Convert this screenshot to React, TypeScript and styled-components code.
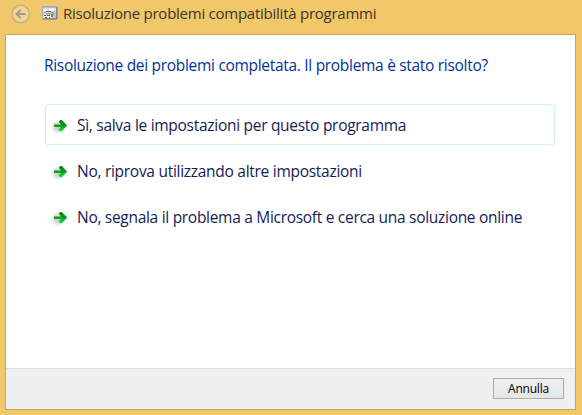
import React from "react";
import styled, { createGlobalStyle } from "styled-components";

const GlobalStyle = createGlobalStyle`
  * { box-sizing: border-box; }
  body { margin: 0; background: #f0c869; font-family: "Open Sans", "Noto Sans", sans-serif; }
`;

const Window = styled.div`
  width: 582px;
  height: 415px;
  padding: 0 6px 5px 5px;
  background: #f0c869;
  display: flex;
  flex-direction: column;
  overflow: hidden;
`;

const TitleBar = styled.header`
  height: 34px;
  flex: none;
  display: flex;
  align-items: flex-start;
  padding: 4px 0 0 6px;
`;

const BackIcon = styled.svg`
  width: 20px;
  height: 20px;
  flex: none;
`;

const ProgramIcon = styled.svg`
  width: 16px;
  height: 14px;
  margin: 2px 0 0 11px;
  flex: none;
`;

const Line = styled.span<{ $spacing: number }>`
  font-size: 15.5px;
  line-height: 20px;
  white-space: nowrap;
  letter-spacing: ${(p) => p.$spacing}px;
`;

const Title = styled(Line)`
  font-size: 15px;
  line-height: 19px;
  margin-left: 5px;
  color: #3a3429;
`;

const Panel = styled.main`
  flex: 1;
  display: flex;
  flex-direction: column;
  border: 1px solid #c6a65b;
  background: #fff;
`;

const Content = styled.section`
  flex: 1;
  padding: 20px 20px 0 38px;
`;

const Heading = styled.h1`
  margin: 0 0 29px;
  height: 20px;
  display: flex;
  font-weight: 400;
  color: #003399;
`;

const Options = styled.div`
  display: flex;
  flex-direction: column;
  gap: 5px;
  margin-left: 1px;
`;

const Option = styled.button<{ $active?: boolean }>`
  height: 41px;
  padding: 0 0 0 5px;
  display: flex;
  align-items: center;
  border: 1px solid ${(p) => (p.$active ? "#c6f1fd" : "transparent")};
  border-radius: 3px;
  background: #fff;
  color: #151c55;
  font-family: inherit;
  text-align: left;
`;

const ArrowIcon = styled.svg`
  width: 18px;
  height: 18px;
  flex: none;
  margin: 2px 8px 0 0;
`;

const Footer = styled.footer`
  height: 41px;
  flex: none;
  display: flex;
  justify-content: flex-end;
  align-items: flex-start;
  padding: 9px 11px 0 0;
  border-top: 1px solid #dfdfdf;
  background: #f0f0f0;
`;

const CancelButton = styled.button`
  width: 71px;
  height: 21px;
  padding: 0;
  border: 1px solid #acacac;
  background: linear-gradient(#f0f0f0, #e5e5e5);
  color: #000;
  font: 12px/19px "Open Sans", "Noto Sans", sans-serif;
  letter-spacing: -0.2px;
`;

const options = [
  { text: "Sì, salva le impostazioni per questo programma", spacing: -0.285, active: true },
  { text: "No, riprova utilizzando altre impostazioni", spacing: -0.28 },
  { text: "No, segnala il problema a Microsoft e cerca una soluzione online", spacing: -0.295 },
];

function GreenArrow() {
  return (
    <ArrowIcon viewBox="0 0 18 18">
      <defs>
        <linearGradient id="green" x1="0" y1="0" x2="0" y2="1">
          <stop offset="0" stopColor="#087b12" />
          <stop offset=".5" stopColor="#08a01a" />
          <stop offset="1" stopColor="#0be83c" />
        </linearGradient>
        <radialGradient id="halo">
          <stop offset="0" stopColor="#999" stopOpacity=".6" />
          <stop offset=".6" stopColor="#bbb" stopOpacity=".45" />
          <stop offset="1" stopColor="#ccc" stopOpacity="0" />
        </radialGradient>
      </defs>
      <ellipse cx="7.2" cy="10" rx="7.5" ry="7.5" fill="url(#halo)" />
      <path d="M3 7.6h7L7.8 4.8 9.2 3h1.6l5.4 5.5-5.4 5.8H9.2l-1.6-1.6 2.3-2.7H3z" fill="url(#green)" />
    </ArrowIcon>
  );
}

export default function App() {
  return (
    <>
      <GlobalStyle />
      <Window>
        <TitleBar>
          <BackIcon viewBox="0 0 20 20">
            <circle cx="9.7" cy="10" r="8.7" fill="#efd698" stroke="#c3b083" strokeWidth="1.5" />
            <path d="M14.5 10H6M9.6 6 5.5 10l4.1 4" fill="none" stroke="#a99a78" strokeWidth="2" />
          </BackIcon>
          <ProgramIcon viewBox="0 0 16 14">
            <path d="M.5.5h14v12H.5z" fill="#dce0ee" stroke="#a5a5b5" />
            <path d="M1 1h13v1H1z" fill="#b3bad6" />
            <path d="M2 3h3v2H2zM7 3h5v2H7z" fill="#fff" />
            <path d="M10 5h4v7h-4z" fill="#b9c7e5" />
            <path d="M2 7.5 4 5.5h5l3 3" fill="none" stroke="#555f6c" />
            <path d="M1 9h8v3H1z" fill="#f5f5f8" />
            <path d="M4 7h5v1.5H4z" fill="#d89b47" />
            <path d="M9 8h2v3H9z" fill="#51a34c" />
            <path d="M2 9h2v1H2zM5 9h3v1H5zM3 11h2v1H3zM7 11h1v1H7z" fill="#596577" />
            <path d="M15 1v12H1" fill="none" stroke="#716d79" />
          </ProgramIcon>
          <Title $spacing={-0.25}>Risoluzione problemi compatibilità programmi</Title>
        </TitleBar>
        <Panel>
          <Content>
            <Heading>
              <Line $spacing={-0.305}>Risoluzione dei problemi completata. Il problema è stato risolto?</Line>
            </Heading>
            <Options>
              {options.map((o) => (
                <Option key={o.text} $active={o.active}>
                  <GreenArrow />
                  <Line $spacing={o.spacing}>{o.text}</Line>
                </Option>
              ))}
            </Options>
          </Content>
          <Footer>
            <CancelButton>Annulla</CancelButton>
          </Footer>
        </Panel>
      </Window>
    </>
  );
}
